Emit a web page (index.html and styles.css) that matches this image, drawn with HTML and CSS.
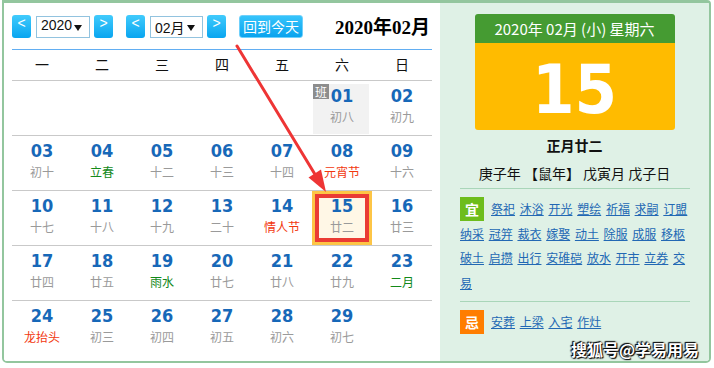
FILE: index.html
```html
<!DOCTYPE html>
<html lang="zh-CN">
<head>
<meta charset="utf-8">
<title>万年历</title>
<link rel="stylesheet" href="styles.css">
</head>
<body>
<div class="frame">
  <section class="cal">
    <div class="toolbar">
      <span class="btn">&lt;</span>
      <span class="sel sel-year">2020<i class="caret"></i></span>
      <span class="btn btn-next">&gt;</span>
      <span class="btn btn-group">&lt;</span>
      <span class="sel sel-month">02月<i class="caret"></i></span>
      <span class="btn btn-next">&gt;</span>
      <span class="today">回到今天</span>
      <span class="title">2020年02月</span>
    </div>
    <div class="weekdays">
      <span>一</span><span>二</span><span>三</span><span>四</span><span>五</span><span>六</span><span>日</span>
    </div>
    <div class="week">
      <div class="day"></div><div class="day"></div><div class="day"></div><div class="day"></div><div class="day"></div>
      <div class="day work"><span class="ban">班</span><b class="num">01</b><span class="lunar">初八</span></div>
      <div class="day"><b class="num">02</b><span class="lunar">初九</span></div>
    </div>
    <div class="week">
      <div class="day"><b class="num">03</b><span class="lunar">初十</span></div>
      <div class="day"><b class="num">04</b><span class="lunar term">立春</span></div>
      <div class="day"><b class="num">05</b><span class="lunar">十二</span></div>
      <div class="day"><b class="num">06</b><span class="lunar">十三</span></div>
      <div class="day"><b class="num">07</b><span class="lunar">十四</span></div>
      <div class="day"><b class="num">08</b><span class="lunar fest">元宵节</span></div>
      <div class="day"><b class="num">09</b><span class="lunar">十六</span></div>
    </div>
    <div class="week">
      <div class="day"><b class="num">10</b><span class="lunar">十七</span></div>
      <div class="day"><b class="num">11</b><span class="lunar">十八</span></div>
      <div class="day"><b class="num">12</b><span class="lunar">十九</span></div>
      <div class="day"><b class="num">13</b><span class="lunar">二十</span></div>
      <div class="day"><b class="num">14</b><span class="lunar fest">情人节</span></div>
      <div class="day selected"><b class="num">15</b><span class="lunar">廿二</span></div>
      <div class="day"><b class="num">16</b><span class="lunar">廿三</span></div>
    </div>
    <div class="week">
      <div class="day"><b class="num">17</b><span class="lunar">廿四</span></div>
      <div class="day"><b class="num">18</b><span class="lunar">廿五</span></div>
      <div class="day"><b class="num">19</b><span class="lunar term">雨水</span></div>
      <div class="day"><b class="num">20</b><span class="lunar">廿七</span></div>
      <div class="day"><b class="num">21</b><span class="lunar">廿八</span></div>
      <div class="day"><b class="num">22</b><span class="lunar">廿九</span></div>
      <div class="day"><b class="num">23</b><span class="lunar term">二月</span></div>
    </div>
    <div class="week">
      <div class="day"><b class="num">24</b><span class="lunar fest">龙抬头</span></div>
      <div class="day"><b class="num">25</b><span class="lunar">初三</span></div>
      <div class="day"><b class="num">26</b><span class="lunar">初四</span></div>
      <div class="day"><b class="num">27</b><span class="lunar">初五</span></div>
      <div class="day"><b class="num">28</b><span class="lunar">初六</span></div>
      <div class="day"><b class="num">29</b><span class="lunar">初七</span></div>
      <div class="day"></div>
    </div>
  </section>
  <aside class="info">
    <div class="card">
      <div class="card-head">2020年 02月 (小) 星期六</div>
      <div class="card-day">15</div>
    </div>
    <div class="lunar-date">正月廿二</div>
    <div class="ganzhi">庚子年 【鼠年】 戊寅月 戊子日</div>
    <div class="yiji">
      <span class="tag tag-yi">宜</span>
      <a href="#">祭祀</a> <a href="#">沐浴</a> <a href="#">开光</a> <a href="#">塑绘</a> <a href="#">祈福</a> <a href="#">求嗣</a> <a href="#">订盟</a> <a href="#">纳采</a> <a href="#">冠笄</a> <a href="#">裁衣</a> <a href="#">嫁娶</a> <a href="#">动土</a> <a href="#">除服</a> <a href="#">成服</a> <a href="#">移柩</a> <a href="#">破土</a> <a href="#">启攒</a> <a href="#">出行</a> <a href="#">安碓硙</a> <a href="#">放水</a> <a href="#">开市</a> <a href="#">立券</a> <a href="#">交易</a>
    </div>
    <div class="yiji ji">
      <span class="tag tag-ji">忌</span>
      <a href="#">安葬</a> <a href="#">上梁</a> <a href="#">入宅</a> <a href="#">作灶</a>
    </div>
    <div class="watermark">搜狐号@学易用易</div>
  </aside>
</div>
<svg class="arrow" width="714" height="368" viewBox="0 0 714 368">
  <line x1="237" y1="46" x2="316" y2="176" stroke="#ee3535" stroke-width="3" stroke-linecap="round"/>
  <polygon points="326,192 308.5,177.5 321,169.5" fill="#ee3535"/>
</svg>
</body>
</html>
```

FILE: styles.css
```css
* { box-sizing: border-box; }
html, body { margin: 0; padding: 0; background: #fff; }
body {
  font-family: "Noto Sans CJK SC", sans-serif;
  color: #222;
  position: relative;
}

.frame {
  display: flex;
  width: 709px;
  height: 363px;
  margin-left: 2px;
  border: solid #93c69e;
  border-width: 3px 2px 2px 2px;
  border-radius: 0 4px 5px 5px;
  overflow: hidden;
}

/* ---------- left calendar ---------- */
.cal {
  width: 436px;
  padding: 12px 8px 0 8px;
  background: #fff;
}

.toolbar {
  display: flex;
  align-items: flex-start;
  padding-bottom: 10px;
  border-bottom: 1px solid #62aef2;
}

.btn {
  width: 19px;
  height: 23px;
  line-height: 22px;
  border-radius: 3px;
  background: linear-gradient(#41cbfc, #09a5f0);
  color: #fff;
  text-align: center;
  font: 14px "Liberation Sans", sans-serif;
}
.btn-next { margin-left: 4px; }
.btn-group { margin-left: 13px; }

.sel {
  position: relative;
  margin: 1px 0 0 5px;
  height: 22px;
  line-height: 20px;
  border: 1px solid #92c3df;
  background: #fff;
  padding-left: 4px;
  font: 14px "Liberation Sans", "Noto Sans CJK SC", sans-serif;
  color: #111;
}
.sel-year { width: 54px; }
.sel-month { width: 53px; }
.caret {
  position: absolute;
  right: 7px;
  top: 8px;
  width: 0;
  height: 0;
  border-left: 4px solid transparent;
  border-right: 4px solid transparent;
  border-top: 6px solid #111;
}

.today {
  margin-left: 13px;
  width: 64px;
  height: 23px;
  line-height: 21px;
  border: 1px solid #6fd0fb;
  border-radius: 3px;
  background: linear-gradient(#36c4fb, #0aa3ee);
  color: #fff;
  font-size: 14px;
  text-align: center;
}

.title {
  margin: 2px 2px 0 auto;
  font: bold 19px/22px "Liberation Serif", "Noto Sans CJK SC", serif;
  color: #000;
}

.weekdays {
  display: grid;
  grid-template-columns: repeat(7, 60px);
  height: 30px;
  line-height: 28px;
  font-size: 14px;
  text-align: center;
  color: #111;
}

.week {
  display: grid;
  grid-template-columns: repeat(7, 60px);
  height: 55px;
  border-top: 1px solid #c9c9c9;
}
.week:first-of-type { border-top: 0; }

.day {
  position: relative;
  padding-top: 4px;
  text-align: center;
}
.num {
  display: block;
  font-family: "DejaVu Sans", sans-serif;
  font-stretch: condensed;
  font-weight: bold;
  font-size: 18px;
  line-height: 22px;
  color: #1768b8;
}
.lunar {
  display: block;
  margin-top: 1px;
  font-size: 12px;
  line-height: 18px;
  color: #9a9a9a;
}
.lunar.term { color: #13891a; }
.lunar.fest { color: #f2380f; }

.day.work {
  background: linear-gradient(#f2f2f2, #f2f2f2) no-repeat 1px 3px / 56px 50px;
}
.ban {
  position: absolute;
  left: 1px;
  top: 3px;
  width: 16px;
  height: 15px;
  line-height: 15px;
  background: #8d8d8d;
  color: #fff;
  font-size: 12px;
  text-align: center;
}

.day.selected {
  background: #fff7e6;
  box-shadow: inset 0 0 0 3px #fdc546, inset 0 0 0 7px #ea3b34;
}

/* ---------- right info panel ---------- */
.info {
  position: relative;
  width: 269px;
  background: #dff1e6;
  padding-top: 11px;
}

.card {
  width: 200px;
  margin: 0 auto;
  border-radius: 3px;
  overflow: hidden;
}
.card-head {
  height: 29px;
  line-height: 29px;
  background: #459b32;
  color: #fff;
  font-size: 15px;
  text-align: center;
}
.card-day {
  height: 87px;
  padding-top: 6px;
  line-height: 81px;
  background: #ffbb00;
  color: #fff;
  font-family: "DejaVu Sans", sans-serif;
  font-stretch: condensed;
  font-weight: bold;
  font-size: 68px;
  text-align: center;
}

.lunar-date {
  margin-top: 5px;
  line-height: 20px;
  font-size: 14px;
  font-weight: bold;
  text-align: center;
  color: #111;
}
.ganzhi {
  margin-top: 8px;
  line-height: 20px;
  font-size: 14px;
  text-align: center;
  color: #111;
}

.yiji {
  margin: 5px 19px 0 20px;
  padding-top: 8px;
  border-top: 1px solid #a9d6b9;
  font-size: 12px;
  line-height: 24.5px;
  word-spacing: 2px;
}
.yiji.ji { margin-top: 6px; }
.yiji a {
  color: #2268b4;
  text-decoration: underline;
}
.tag {
  float: left;
  width: 24px;
  height: 24px;
  margin-right: 7px;
  line-height: 24px;
  text-align: center;
  color: #fff;
  font-size: 14px;
  font-weight: bold;
}
.tag-yi { background: #6dbd1c; }
.tag-ji { background: #ff7d00; }

.watermark {
  position: absolute;
  right: 10px;
  bottom: 2px;
  font-size: 16px;
  font-weight: bold;
  line-height: 20px;
  color: #fff;
  text-shadow: 0 0 2px #000, 1px 1px 1px #000, -1px -1px 1px #000;
}

.arrow {
  position: absolute;
  left: 0;
  top: 0;
  pointer-events: none;
}
```
